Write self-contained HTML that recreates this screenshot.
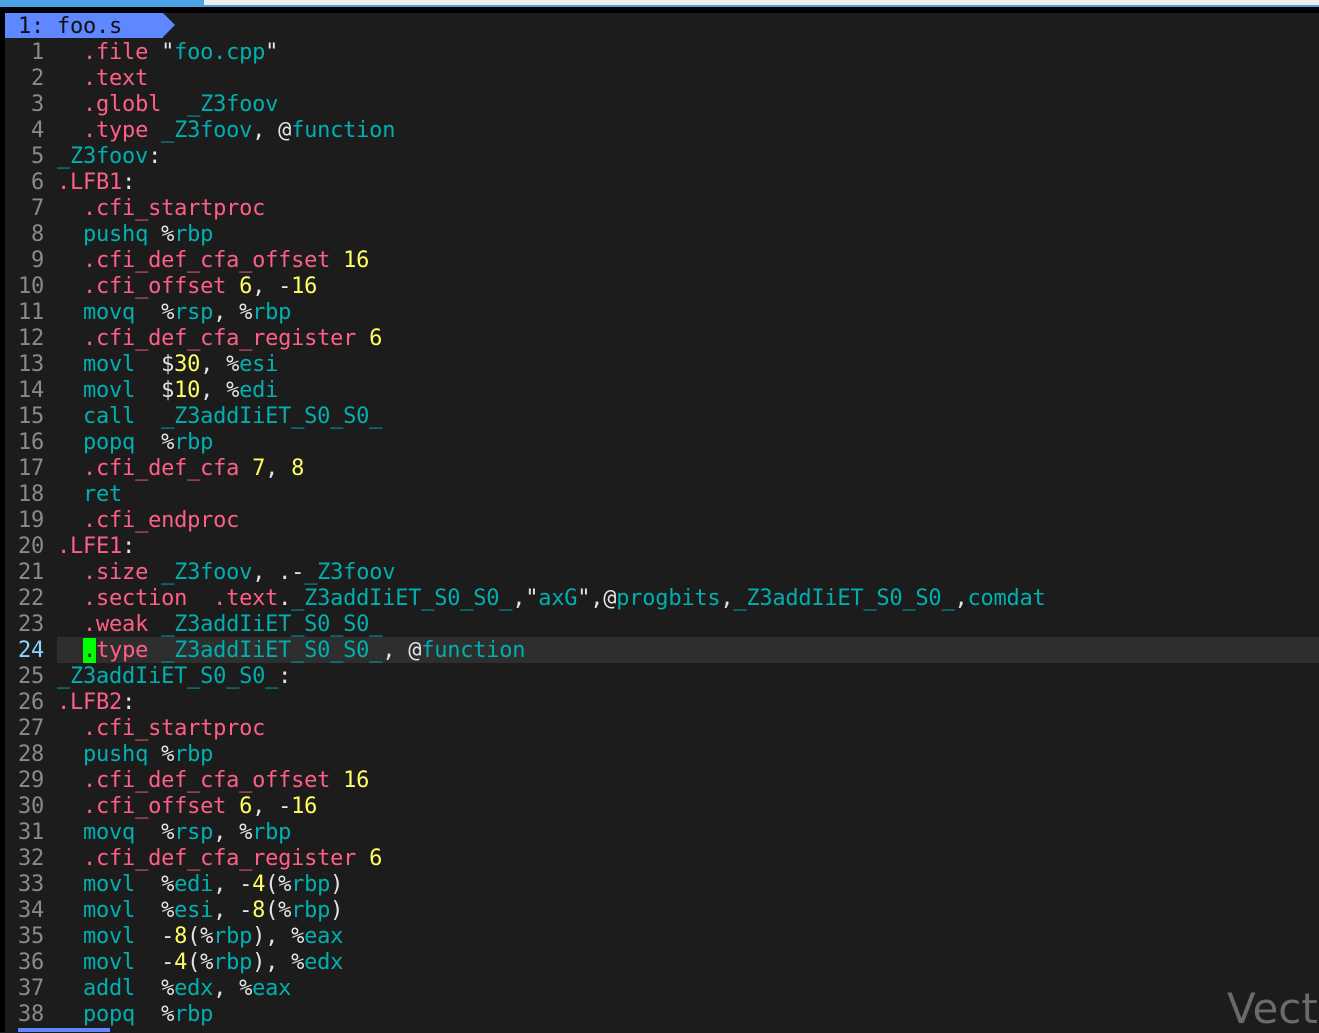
<!DOCTYPE html>
<html><head><meta charset="utf-8"><style>
html,body{margin:0;padding:0;width:1319px;height:1032px;overflow:hidden;background:#1c1c1c;}
.top1{position:absolute;left:0;top:0;width:204px;height:5px;background:#4aa3e6;}
.top2{position:absolute;left:204px;top:0;width:1115px;height:5px;background:#eeeeee;}
.top3{position:absolute;left:0;top:5px;width:1319px;height:2px;background:#4aa3e6;}
.top4{position:absolute;left:0;top:7px;width:1319px;height:6px;background:#000;}
.lstrip{position:absolute;left:0;top:7px;width:5px;height:1025px;background:#000;}
.tab{position:absolute;left:5px;top:13px;width:158px;height:25px;background:#5f87ff;}
.tabarrow{position:absolute;left:163px;top:13px;width:0;height:0;border-top:12.5px solid transparent;border-bottom:12.5px solid transparent;border-left:12px solid #5f87ff;}
.code{position:absolute;left:5px;top:40px;font-family:"DejaVu Sans Mono","Liberation Mono",monospace;font-size:22px;letter-spacing:-0.24px;line-height:26px;color:#e4e4e4;}
.tabtxt{position:absolute;left:18px;top:14px;font-family:"DejaVu Sans Mono","Liberation Mono",monospace;font-size:22px;letter-spacing:-0.24px;line-height:26px;white-space:pre;color:#111;}
.l{height:26px;white-space:pre;overflow:visible;}
.n{color:#8a8a8a;}
.cur{position:absolute;left:57px;top:637px;width:1262px;height:26px;background:#2e2e2e;}
.p{color:#ff5f87}.t{color:#00afaf}.y{color:#ffff5f}
.cn{color:#87d7ff}
.cc{background:#00ff00;color:#1c1c1c}
.vect{position:absolute;left:1227px;top:984px;font-family:"DejaVu Sans","Liberation Sans",sans-serif;font-size:42px;color:#6a6a6a;}
.sb{position:absolute;left:18px;top:1028px;width:92px;height:4px;background:#5f87ff;}
</style></head><body>
<div class="top1"></div><div class="top2"></div><div class="top3"></div><div class="top4"></div><div class="lstrip"></div>
<div class="tab"></div><div class="tabarrow"></div>
<div class="tabtxt">1: foo.s</div>
<div class="cur"></div>
<div class="code">
<div class="l"><span class="n">  1 </span>  <span class="p">.file</span> "<span class="t">foo.cpp</span>"</div>
<div class="l"><span class="n">  2 </span>  <span class="p">.text</span></div>
<div class="l"><span class="n">  3 </span>  <span class="p">.globl</span>  <span class="t">_Z3foov</span></div>
<div class="l"><span class="n">  4 </span>  <span class="p">.type</span> <span class="t">_Z3foov</span>, @<span class="t">function</span></div>
<div class="l"><span class="n">  5 </span><span class="t">_Z3foov</span>:</div>
<div class="l"><span class="n">  6 </span><span class="p">.LFB1</span>:</div>
<div class="l"><span class="n">  7 </span>  <span class="p">.cfi_startproc</span></div>
<div class="l"><span class="n">  8 </span>  <span class="t">pushq</span> %<span class="t">rbp</span></div>
<div class="l"><span class="n">  9 </span>  <span class="p">.cfi_def_cfa_offset</span> <span class="y">16</span></div>
<div class="l"><span class="n"> 10 </span>  <span class="p">.cfi_offset</span> <span class="y">6</span>, -<span class="y">16</span></div>
<div class="l"><span class="n"> 11 </span>  <span class="t">movq</span>  %<span class="t">rsp</span>, %<span class="t">rbp</span></div>
<div class="l"><span class="n"> 12 </span>  <span class="p">.cfi_def_cfa_register</span> <span class="y">6</span></div>
<div class="l"><span class="n"> 13 </span>  <span class="t">movl</span>  $<span class="y">30</span>, %<span class="t">esi</span></div>
<div class="l"><span class="n"> 14 </span>  <span class="t">movl</span>  $<span class="y">10</span>, %<span class="t">edi</span></div>
<div class="l"><span class="n"> 15 </span>  <span class="t">call</span>  <span class="t">_Z3addIiET_S0_S0_</span></div>
<div class="l"><span class="n"> 16 </span>  <span class="t">popq</span>  %<span class="t">rbp</span></div>
<div class="l"><span class="n"> 17 </span>  <span class="p">.cfi_def_cfa</span> <span class="y">7</span>, <span class="y">8</span></div>
<div class="l"><span class="n"> 18 </span>  <span class="t">ret</span></div>
<div class="l"><span class="n"> 19 </span>  <span class="p">.cfi_endproc</span></div>
<div class="l"><span class="n"> 20 </span><span class="p">.LFE1</span>:</div>
<div class="l"><span class="n"> 21 </span>  <span class="p">.size</span> <span class="t">_Z3foov</span>, .-<span class="t">_Z3foov</span></div>
<div class="l"><span class="n"> 22 </span>  <span class="p">.section</span>  <span class="p">.text</span>.<span class="t">_Z3addIiET_S0_S0_</span>,"<span class="t">axG</span>",@<span class="t">progbits</span>,<span class="t">_Z3addIiET_S0_S0_</span>,<span class="t">comdat</span></div>
<div class="l"><span class="n"> 23 </span>  <span class="p">.weak</span> <span class="t">_Z3addIiET_S0_S0_</span></div>
<div class="l"><span class="cn"> 24 </span>  <span class="cc">.</span><span class="p">type</span> <span class="t">_Z3addIiET_S0_S0_</span>, @<span class="t">function</span></div>
<div class="l"><span class="n"> 25 </span><span class="t">_Z3addIiET_S0_S0_</span>:</div>
<div class="l"><span class="n"> 26 </span><span class="p">.LFB2</span>:</div>
<div class="l"><span class="n"> 27 </span>  <span class="p">.cfi_startproc</span></div>
<div class="l"><span class="n"> 28 </span>  <span class="t">pushq</span> %<span class="t">rbp</span></div>
<div class="l"><span class="n"> 29 </span>  <span class="p">.cfi_def_cfa_offset</span> <span class="y">16</span></div>
<div class="l"><span class="n"> 30 </span>  <span class="p">.cfi_offset</span> <span class="y">6</span>, -<span class="y">16</span></div>
<div class="l"><span class="n"> 31 </span>  <span class="t">movq</span>  %<span class="t">rsp</span>, %<span class="t">rbp</span></div>
<div class="l"><span class="n"> 32 </span>  <span class="p">.cfi_def_cfa_register</span> <span class="y">6</span></div>
<div class="l"><span class="n"> 33 </span>  <span class="t">movl</span>  %<span class="t">edi</span>, -<span class="y">4</span>(%<span class="t">rbp</span>)</div>
<div class="l"><span class="n"> 34 </span>  <span class="t">movl</span>  %<span class="t">esi</span>, -<span class="y">8</span>(%<span class="t">rbp</span>)</div>
<div class="l"><span class="n"> 35 </span>  <span class="t">movl</span>  -<span class="y">8</span>(%<span class="t">rbp</span>), %<span class="t">eax</span></div>
<div class="l"><span class="n"> 36 </span>  <span class="t">movl</span>  -<span class="y">4</span>(%<span class="t">rbp</span>), %<span class="t">edx</span></div>
<div class="l"><span class="n"> 37 </span>  <span class="t">addl</span>  %<span class="t">edx</span>, %<span class="t">eax</span></div>
<div class="l"><span class="n"> 38 </span>  <span class="t">popq</span>  %<span class="t">rbp</span></div>
</div>
<div class="vect">Vect</div>
<div class="sb"></div>
</body></html>
